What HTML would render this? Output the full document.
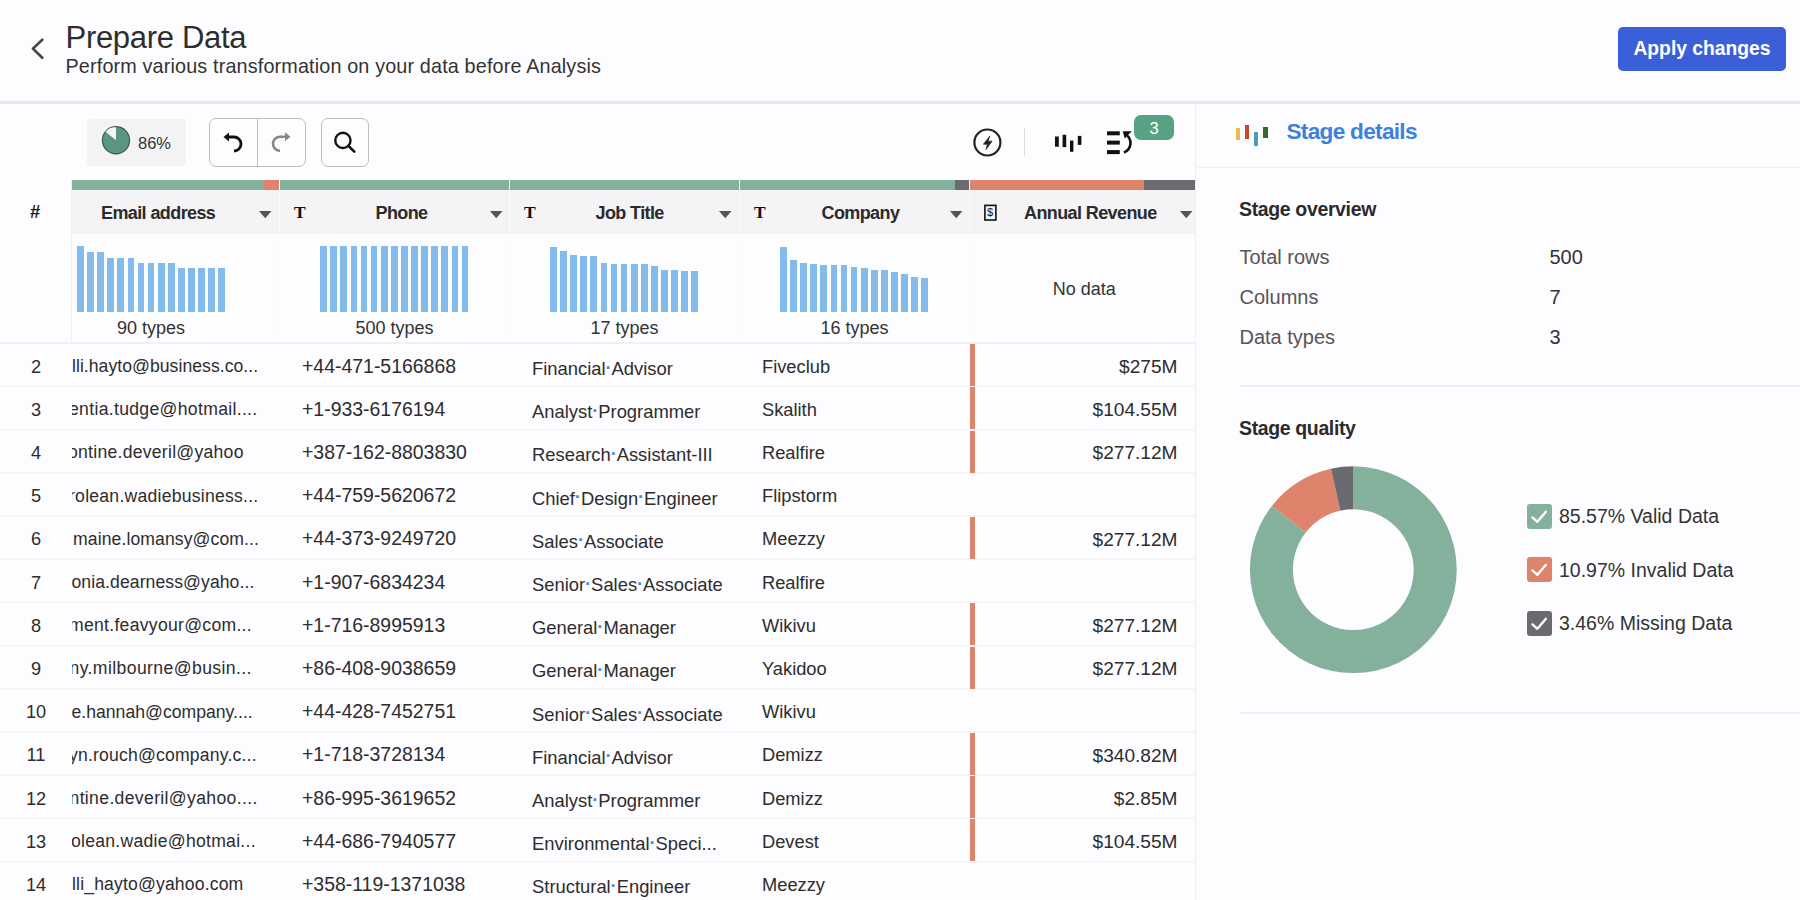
<!DOCTYPE html>
<html><head><meta charset="utf-8"><title>Prepare Data</title>
<style>
html,body{margin:0;padding:0;width:1800px;height:900px;overflow:hidden;background:#fdfcff;font-family:"Liberation Sans", sans-serif;}
.t{position:absolute;white-space:pre;line-height:1;}
.r{position:absolute;}
.dot{color:#3f8ae8;position:relative;top:-1.5px;font-weight:700;margin:0 -0.1px;}
</style></head><body>
<div class="r" style="left:0px;top:0px;width:1800px;height:101px;background:#fdfcfe;"></div>
<div class="r" style="left:0px;top:101px;width:1800px;height:2.5px;background:#e7e6ea;"></div>
<svg class="r" style="left:0;top:0" width="80" height="80"><path d="M42.3 39.7 L32.9 48.6 L42.3 57.8" fill="none" stroke="#444" stroke-width="2.6" stroke-linecap="round" stroke-linejoin="round"/></svg>
<div class="t" style="top:21.76px;font-size:31px;color:#2e2e2e;font-weight:400;letter-spacing:-0.3px;left:65.5px;">Prepare Data</div>
<div class="t" style="top:56.54px;font-size:19.8px;color:#333;font-weight:400;letter-spacing:0.15px;left:65.5px;">Perform various transformation on your data before Analysis</div>
<div class="r" style="left:1618px;top:27px;width:168px;height:44px;background:#3b5fd8;border-radius:5px;"></div>
<div class="t" style="top:39.46px;font-size:19.3px;color:#fff;font-weight:700;left:1202px;width:1000px;text-align:center;">Apply changes</div>
<div class="r" style="left:87px;top:118.5px;width:99px;height:47.5px;background:#f3f2f5;border-radius:4px;"></div>
<svg class="r" style="left:0;top:0" width="200" height="200"><circle cx="116" cy="140.3" r="13.6" fill="#5a9682" stroke="#3d5a50" stroke-width="1.2"/><path d="M116 140.3 L116 127.30000000000001 A13.0 13.0 0 0 0 105.52 131.63 Z" fill="#f4f5f2"/></svg>
<div class="t" style="top:134.73px;font-size:16.5px;color:#333;font-weight:400;left:138px;">86%</div>
<div class="r" style="left:208.5px;top:118px;width:97px;height:48.5px;background:transparent;border:1px solid #bdbdbd;border-radius:7px;box-sizing:border-box;"></div>
<div class="r" style="left:257px;top:118px;width:1px;height:48.5px;background:#bdbdbd;"></div>
<div class="r" style="left:320.5px;top:118px;width:48.5px;height:48.5px;background:transparent;border:1px solid #bdbdbd;border-radius:7px;box-sizing:border-box;"></div>
<svg class="r" style="left:0;top:0" width="400" height="200"><path d="M227 137 L234 137 A7 7 0 0 1 234 151 L234.5 151" fill="none" stroke="#111" stroke-width="2.8" stroke-linecap="round"/><path d="M223.5 137 L229 132.5 L229 141.5 Z" fill="#111"/><path d="M287 136.8 L280 136.8 A7 7 0 0 0 280 150.8 L279.5 150.8" fill="none" stroke="#888" stroke-width="2.6" stroke-linecap="round"/><path d="M290.5 136.8 L285 132.3 L285 141.3 Z" fill="#888"/><circle cx="342.9" cy="140.4" r="7.6" fill="none" stroke="#111" stroke-width="2.4"/><path d="M348.5 146 L354.3 151.6" stroke="#111" stroke-width="2.6" stroke-linecap="round"/></svg>
<svg class="r" style="left:0;top:0" width="1200" height="200"><circle cx="987.4" cy="142.5" r="13" fill="none" stroke="#222" stroke-width="2.2"/><path d="M989.9 135.9 L983.4 144.2 L987.4 144.2 L986 149.6 L992 141.2 L988 141.2 Z" fill="#222" stroke="#222" stroke-width="0.7" stroke-linejoin="round"/><rect x="1055" y="136.5" width="3.8" height="10.2" fill="#111"/><rect x="1062.6" y="134.8" width="3.6" height="12.3" fill="#111"/><rect x="1070" y="140.6" width="3.4" height="11.2" fill="#111"/><rect x="1077.8" y="135.9" width="3.6" height="9" fill="#111"/><rect x="1107" y="131.3" width="12.8" height="4" fill="#111"/><rect x="1107" y="140.6" width="12.8" height="4" fill="#111"/><rect x="1107" y="150.1" width="12.8" height="4" fill="#111"/><path d="M1124 152.5 A10 10 0 0 0 1125.5 134.5" fill="none" stroke="#111" stroke-width="2.6"/><path d="M1122.8 131.2 L1131.8 131.2 L1124.6 138.6 Z" fill="#111"/></svg>
<div class="r" style="left:1024px;top:128.3px;width:1.2px;height:28.2px;background:#dcdcdc;"></div>
<div class="r" style="left:1134.3px;top:114.6px;width:39.5px;height:25.5px;background:#58a283;border-radius:7px;"></div>
<div class="t" style="top:119.63px;font-size:16.5px;color:#fff;font-weight:400;left:654px;width:1000px;text-align:center;">3</div>
<div class="r" style="left:72px;top:180px;width:192px;height:10px;background:#84b19b;"></div>
<div class="r" style="left:264px;top:180px;width:15px;height:10px;background:#de836c;"></div>
<div class="r" style="left:280px;top:180px;width:229px;height:10px;background:#84b19b;"></div>
<div class="r" style="left:510px;top:180px;width:229px;height:10px;background:#84b19b;"></div>
<div class="r" style="left:740px;top:180px;width:215px;height:10px;background:#84b19b;"></div>
<div class="r" style="left:955px;top:180px;width:14px;height:10px;background:#6b6a6f;"></div>
<div class="r" style="left:970px;top:180px;width:174px;height:10px;background:#de836c;"></div>
<div class="r" style="left:1144px;top:180px;width:51.5px;height:10px;background:#6b6a6f;"></div>
<div class="r" style="left:72px;top:190px;width:207px;height:43.5px;background:#f4f3f6;"></div>
<div class="r" style="left:72px;top:233.5px;width:207px;height:109px;background:#fdfcff;"></div>
<div class="r" style="left:280px;top:190px;width:229px;height:43.5px;background:#f4f3f6;"></div>
<div class="r" style="left:280px;top:233.5px;width:229px;height:109px;background:#fdfcff;"></div>
<div class="r" style="left:510px;top:190px;width:229px;height:43.5px;background:#f4f3f6;"></div>
<div class="r" style="left:510px;top:233.5px;width:229px;height:109px;background:#fdfcff;"></div>
<div class="r" style="left:740px;top:190px;width:229px;height:43.5px;background:#f4f3f6;"></div>
<div class="r" style="left:740px;top:233.5px;width:229px;height:109px;background:#fdfcff;"></div>
<div class="r" style="left:970px;top:190px;width:225.5px;height:43.5px;background:#f4f3f6;"></div>
<div class="r" style="left:970px;top:233.5px;width:225.5px;height:109px;background:#fdfcff;"></div>
<div class="r" style="left:71px;top:180px;width:1px;height:163px;background:#efeef2;"></div>
<div class="r" style="left:279px;top:190px;width:1px;height:153px;background:#fbfbfd;"></div>
<div class="r" style="left:509px;top:190px;width:1px;height:153px;background:#fbfbfd;"></div>
<div class="r" style="left:739px;top:190px;width:1px;height:153px;background:#fbfbfd;"></div>
<div class="r" style="left:969px;top:190px;width:1px;height:153px;background:#fbfbfd;"></div>
<div class="r" style="left:0px;top:342px;width:1194.5px;height:2px;background:#f1f0f4;"></div>
<div class="t" style="top:202.74px;font-size:18.5px;color:#222;font-weight:700;left:-464.8px;width:1000px;text-align:center;">#</div>
<div class="t" style="top:204.46px;font-size:18px;color:#2b2b2b;font-weight:700;letter-spacing:-0.6px;left:101px;">Email address</div>
<svg class="r" style="left:259.35px;top:210px" width="13" height="9"><path d="M0 1 L12.5 1 L6.25 8.2 Z" fill="#555"/></svg>
<div class="t" style="top:204.46px;font-size:18px;color:#2b2b2b;font-weight:700;letter-spacing:-0.6px;left:375.5px;">Phone</div>
<svg class="r" style="left:490.05px;top:210px" width="13" height="9"><path d="M0 1 L12.5 1 L6.25 8.2 Z" fill="#555"/></svg>
<div class="t" style="top:204.46px;font-size:18px;color:#2b2b2b;font-weight:700;letter-spacing:-0.6px;left:595.5px;">Job Title</div>
<svg class="r" style="left:719.45px;top:210px" width="13" height="9"><path d="M0 1 L12.5 1 L6.25 8.2 Z" fill="#555"/></svg>
<div class="t" style="top:204.46px;font-size:18px;color:#2b2b2b;font-weight:700;letter-spacing:-0.6px;left:821.5px;">Company</div>
<svg class="r" style="left:949.75px;top:210px" width="13" height="9"><path d="M0 1 L12.5 1 L6.25 8.2 Z" fill="#555"/></svg>
<div class="t" style="top:204.46px;font-size:18px;color:#2b2b2b;font-weight:700;letter-spacing:-0.6px;left:1024px;">Annual Revenue</div>
<svg class="r" style="left:1179.55px;top:210px" width="13" height="9"><path d="M0 1 L12.5 1 L6.25 8.2 Z" fill="#555"/></svg>
<div class="t" style="top:204.19px;font-size:17.5px;color:#111;font-weight:700;left:294px;font-family:'Liberation Serif',serif;">T</div>
<div class="t" style="top:204.19px;font-size:17.5px;color:#111;font-weight:700;left:524px;font-family:'Liberation Serif',serif;">T</div>
<div class="t" style="top:204.19px;font-size:17.5px;color:#111;font-weight:700;left:754px;font-family:'Liberation Serif',serif;">T</div>
<svg class="r" style="left:983px;top:203px" width="16" height="20"><rect x="1.9" y="2.4" width="11" height="14.6" fill="none" stroke="#111" stroke-width="1.6"/></svg>
<div class="t" style="top:207.49px;font-size:11px;color:#111;font-weight:400;left:490px;width:1000px;text-align:center;">$</div>
<div class="r" style="left:77.0px;top:246.4px;width:6.8px;height:65.9px;background:#84bbef;"></div><div class="r" style="left:87.1px;top:252.1px;width:6.8px;height:60.2px;background:#84bbef;"></div><div class="r" style="left:97.2px;top:252.1px;width:6.8px;height:60.2px;background:#84bbef;"></div><div class="r" style="left:107.3px;top:257.6px;width:6.8px;height:54.7px;background:#84bbef;"></div><div class="r" style="left:117.4px;top:257.6px;width:6.8px;height:54.7px;background:#84bbef;"></div><div class="r" style="left:127.5px;top:257.6px;width:6.8px;height:54.7px;background:#84bbef;"></div><div class="r" style="left:137.6px;top:262.8px;width:6.8px;height:49.5px;background:#84bbef;"></div><div class="r" style="left:147.7px;top:262.8px;width:6.8px;height:49.5px;background:#84bbef;"></div><div class="r" style="left:157.8px;top:262.8px;width:6.8px;height:49.5px;background:#84bbef;"></div><div class="r" style="left:167.9px;top:262.8px;width:6.8px;height:49.5px;background:#84bbef;"></div><div class="r" style="left:178.0px;top:268.3px;width:6.8px;height:44.0px;background:#84bbef;"></div><div class="r" style="left:188.1px;top:268.3px;width:6.8px;height:44.0px;background:#84bbef;"></div><div class="r" style="left:198.2px;top:268.3px;width:6.8px;height:44.0px;background:#84bbef;"></div><div class="r" style="left:208.3px;top:268.3px;width:6.8px;height:44.0px;background:#84bbef;"></div><div class="r" style="left:218.4px;top:268.3px;width:6.8px;height:44.0px;background:#84bbef;"></div>
<div class="r" style="left:320.2px;top:246.4px;width:6.8px;height:65.9px;background:#84bbef;"></div><div class="r" style="left:330.3px;top:246.4px;width:6.8px;height:65.9px;background:#84bbef;"></div><div class="r" style="left:340.4px;top:246.4px;width:6.8px;height:65.9px;background:#84bbef;"></div><div class="r" style="left:350.5px;top:246.4px;width:6.8px;height:65.9px;background:#84bbef;"></div><div class="r" style="left:360.6px;top:246.4px;width:6.8px;height:65.9px;background:#84bbef;"></div><div class="r" style="left:370.7px;top:246.4px;width:6.8px;height:65.9px;background:#84bbef;"></div><div class="r" style="left:380.8px;top:246.4px;width:6.8px;height:65.9px;background:#84bbef;"></div><div class="r" style="left:390.9px;top:246.4px;width:6.8px;height:65.9px;background:#84bbef;"></div><div class="r" style="left:401.0px;top:246.4px;width:6.8px;height:65.9px;background:#84bbef;"></div><div class="r" style="left:411.1px;top:246.4px;width:6.8px;height:65.9px;background:#84bbef;"></div><div class="r" style="left:421.2px;top:246.4px;width:6.8px;height:65.9px;background:#84bbef;"></div><div class="r" style="left:431.3px;top:246.4px;width:6.8px;height:65.9px;background:#84bbef;"></div><div class="r" style="left:441.4px;top:246.4px;width:6.8px;height:65.9px;background:#84bbef;"></div><div class="r" style="left:451.5px;top:246.4px;width:6.8px;height:65.9px;background:#84bbef;"></div><div class="r" style="left:461.6px;top:246.4px;width:6.8px;height:65.9px;background:#84bbef;"></div>
<div class="r" style="left:550.0px;top:246.7px;width:6.8px;height:65.3px;background:#84bbef;"></div><div class="r" style="left:560.1px;top:251.4px;width:6.8px;height:60.6px;background:#84bbef;"></div><div class="r" style="left:570.2px;top:254.7px;width:6.8px;height:57.3px;background:#84bbef;"></div><div class="r" style="left:580.3px;top:256.1px;width:6.8px;height:55.9px;background:#84bbef;"></div><div class="r" style="left:590.4px;top:256.1px;width:6.8px;height:55.9px;background:#84bbef;"></div><div class="r" style="left:600.5px;top:263px;width:6.8px;height:49px;background:#84bbef;"></div><div class="r" style="left:610.6px;top:264.4px;width:6.8px;height:47.6px;background:#84bbef;"></div><div class="r" style="left:620.7px;top:264.4px;width:6.8px;height:47.6px;background:#84bbef;"></div><div class="r" style="left:630.8px;top:264.4px;width:6.8px;height:47.6px;background:#84bbef;"></div><div class="r" style="left:640.9px;top:264.4px;width:6.8px;height:47.6px;background:#84bbef;"></div><div class="r" style="left:651.0px;top:266px;width:6.8px;height:46px;background:#84bbef;"></div><div class="r" style="left:661.1px;top:269.7px;width:6.8px;height:42.3px;background:#84bbef;"></div><div class="r" style="left:671.2px;top:269.7px;width:6.8px;height:42.3px;background:#84bbef;"></div><div class="r" style="left:681.3px;top:271.1px;width:6.8px;height:40.9px;background:#84bbef;"></div><div class="r" style="left:691.4px;top:271.1px;width:6.8px;height:40.9px;background:#84bbef;"></div>
<div class="r" style="left:780.0px;top:246.7px;width:6.8px;height:65.3px;background:#84bbef;"></div><div class="r" style="left:790.1px;top:259.7px;width:6.8px;height:52.3px;background:#84bbef;"></div><div class="r" style="left:800.2px;top:262.5px;width:6.8px;height:49.5px;background:#84bbef;"></div><div class="r" style="left:810.3px;top:263.9px;width:6.8px;height:48.1px;background:#84bbef;"></div><div class="r" style="left:820.4px;top:265.3px;width:6.8px;height:46.7px;background:#84bbef;"></div><div class="r" style="left:830.5px;top:265.3px;width:6.8px;height:46.7px;background:#84bbef;"></div><div class="r" style="left:840.6px;top:265.3px;width:6.8px;height:46.7px;background:#84bbef;"></div><div class="r" style="left:850.7px;top:266.7px;width:6.8px;height:45.3px;background:#84bbef;"></div><div class="r" style="left:860.8px;top:268px;width:6.8px;height:44px;background:#84bbef;"></div><div class="r" style="left:870.9px;top:269.7px;width:6.8px;height:42.3px;background:#84bbef;"></div><div class="r" style="left:881.0px;top:269.7px;width:6.8px;height:42.3px;background:#84bbef;"></div><div class="r" style="left:891.1px;top:272.2px;width:6.8px;height:39.8px;background:#84bbef;"></div><div class="r" style="left:901.2px;top:273.9px;width:6.8px;height:38.1px;background:#84bbef;"></div><div class="r" style="left:911.3px;top:277px;width:6.8px;height:35px;background:#84bbef;"></div><div class="r" style="left:921.4px;top:278.3px;width:6.8px;height:33.7px;background:#84bbef;"></div>
<div class="t" style="top:319.26px;font-size:18px;color:#333;font-weight:400;left:-349px;width:1000px;text-align:center;">90 types</div>
<div class="t" style="top:319.26px;font-size:18px;color:#333;font-weight:400;left:-105.5px;width:1000px;text-align:center;">500 types</div>
<div class="t" style="top:319.26px;font-size:18px;color:#333;font-weight:400;left:124.5px;width:1000px;text-align:center;">17 types</div>
<div class="t" style="top:319.26px;font-size:18px;color:#333;font-weight:400;left:354.5px;width:1000px;text-align:center;">16 types</div>
<div class="t" style="top:279.76px;font-size:18px;color:#333;font-weight:400;left:584.3px;width:1000px;text-align:center;">No data</div>
<div class="r" style="left:0px;top:385px;width:1194.5px;height:2px;background:#f5f4f7;"></div>
<div class="t" style="top:357.59px;font-size:18.2px;color:#2d2d2d;font-weight:400;left:-464px;width:1000px;text-align:center;">2</div>
<div class="r" style="left:72px;top:343.20px;width:206px;height:43.2px;overflow:hidden"><div class="t" style="top:14.90px;font-size:17.6px;color:#2d2d2d;font-weight:400;letter-spacing:0.043px;left:0px;">lli.hayto@business.co...</div></div>
<div class="t" style="top:356.54px;font-size:19.45px;color:#2d2d2d;font-weight:400;left:302px;">+44-471-5166868</div>
<div class="t" style="top:360.02px;font-size:18.4px;color:#2d2d2d;font-weight:400;left:532px;">Financial<span class="dot">·</span>Advisor</div>
<div class="t" style="top:357.51px;font-size:18.3px;color:#2d2d2d;font-weight:400;left:762px;">Fiveclub</div>
<div class="r" style="left:969.8px;top:344.2px;width:5.5px;height:42.0px;background:#de836c;"></div>
<div class="t" style="top:356.83px;font-size:19.1px;color:#2d2d2d;font-weight:400;right:622.5px;">$275M</div>
<div class="r" style="left:0px;top:429px;width:1194.5px;height:2px;background:#f5f4f7;"></div>
<div class="t" style="top:400.79px;font-size:18.2px;color:#2d2d2d;font-weight:400;left:-464px;width:1000px;text-align:center;">3</div>
<div class="r" style="left:72px;top:386.40px;width:206px;height:43.2px;overflow:hidden"><div class="t" style="top:14.90px;font-size:17.6px;color:#2d2d2d;font-weight:400;letter-spacing:0.318px;left:-3px;">entia.tudge@hotmail....</div></div>
<div class="t" style="top:399.74px;font-size:19.45px;color:#2d2d2d;font-weight:400;left:302px;">+1-933-6176194</div>
<div class="t" style="top:403.22px;font-size:18.4px;color:#2d2d2d;font-weight:400;left:532px;">Analyst<span class="dot">·</span>Programmer</div>
<div class="t" style="top:400.71px;font-size:18.3px;color:#2d2d2d;font-weight:400;left:762px;">Skalith</div>
<div class="r" style="left:969.8px;top:387.4px;width:5.5px;height:42.0px;background:#de836c;"></div>
<div class="t" style="top:400.03px;font-size:19.1px;color:#2d2d2d;font-weight:400;right:622.5px;">$104.55M</div>
<div class="r" style="left:0px;top:472px;width:1194.5px;height:2px;background:#f5f4f7;"></div>
<div class="t" style="top:443.99px;font-size:18.2px;color:#2d2d2d;font-weight:400;left:-464px;width:1000px;text-align:center;">4</div>
<div class="r" style="left:72px;top:429.60px;width:206px;height:43.2px;overflow:hidden"><div class="t" style="top:14.90px;font-size:17.6px;color:#2d2d2d;font-weight:400;letter-spacing:0.263px;left:-4px;">ontine.deveril@yahoo</div></div>
<div class="t" style="top:442.94px;font-size:19.45px;color:#2d2d2d;font-weight:400;left:302px;">+387-162-8803830</div>
<div class="t" style="top:446.42px;font-size:18.4px;color:#2d2d2d;font-weight:400;left:532px;">Research<span class="dot">·</span>Assistant-III</div>
<div class="t" style="top:443.91px;font-size:18.3px;color:#2d2d2d;font-weight:400;left:762px;">Realfire</div>
<div class="r" style="left:969.8px;top:430.6px;width:5.5px;height:42.0px;background:#de836c;"></div>
<div class="t" style="top:443.23px;font-size:19.1px;color:#2d2d2d;font-weight:400;right:622.5px;">$277.12M</div>
<div class="r" style="left:0px;top:515px;width:1194.5px;height:2px;background:#f5f4f7;"></div>
<div class="t" style="top:487.19px;font-size:18.2px;color:#2d2d2d;font-weight:400;left:-464px;width:1000px;text-align:center;">5</div>
<div class="r" style="left:72px;top:472.80px;width:206px;height:43.2px;overflow:hidden"><div class="t" style="top:14.90px;font-size:17.6px;color:#2d2d2d;font-weight:400;letter-spacing:0.245px;left:-3px;">rolean.wadiebusiness...</div></div>
<div class="t" style="top:486.14px;font-size:19.45px;color:#2d2d2d;font-weight:400;left:302px;">+44-759-5620672</div>
<div class="t" style="top:489.62px;font-size:18.4px;color:#2d2d2d;font-weight:400;left:532px;">Chief<span class="dot">·</span>Design<span class="dot">·</span>Engineer</div>
<div class="t" style="top:487.11px;font-size:18.3px;color:#2d2d2d;font-weight:400;left:762px;">Flipstorm</div>
<div class="r" style="left:0px;top:558px;width:1194.5px;height:2px;background:#f5f4f7;"></div>
<div class="t" style="top:530.39px;font-size:18.2px;color:#2d2d2d;font-weight:400;left:-464px;width:1000px;text-align:center;">6</div>
<div class="r" style="left:72px;top:516.00px;width:206px;height:43.2px;overflow:hidden"><div class="t" style="top:14.90px;font-size:17.6px;color:#2d2d2d;font-weight:400;letter-spacing:0.095px;left:1px;">maine.lomansy@com...</div></div>
<div class="t" style="top:529.34px;font-size:19.45px;color:#2d2d2d;font-weight:400;left:302px;">+44-373-9249720</div>
<div class="t" style="top:532.82px;font-size:18.4px;color:#2d2d2d;font-weight:400;left:532px;">Sales<span class="dot">·</span>Associate</div>
<div class="t" style="top:530.31px;font-size:18.3px;color:#2d2d2d;font-weight:400;left:762px;">Meezzy</div>
<div class="r" style="left:969.8px;top:517.0px;width:5.5px;height:42.0px;background:#de836c;"></div>
<div class="t" style="top:529.63px;font-size:19.1px;color:#2d2d2d;font-weight:400;right:622.5px;">$277.12M</div>
<div class="r" style="left:0px;top:601px;width:1194.5px;height:2px;background:#f5f4f7;"></div>
<div class="t" style="top:573.59px;font-size:18.2px;color:#2d2d2d;font-weight:400;left:-464px;width:1000px;text-align:center;">7</div>
<div class="r" style="left:72px;top:559.20px;width:206px;height:43.2px;overflow:hidden"><div class="t" style="top:14.90px;font-size:17.6px;color:#2d2d2d;font-weight:400;letter-spacing:0.08px;left:-0.5px;">onia.dearness@yaho...</div></div>
<div class="t" style="top:572.54px;font-size:19.45px;color:#2d2d2d;font-weight:400;left:302px;">+1-907-6834234</div>
<div class="t" style="top:576.02px;font-size:18.4px;color:#2d2d2d;font-weight:400;left:532px;">Senior<span class="dot">·</span>Sales<span class="dot">·</span>Associate</div>
<div class="t" style="top:573.51px;font-size:18.3px;color:#2d2d2d;font-weight:400;left:762px;">Realfire</div>
<div class="r" style="left:0px;top:645px;width:1194.5px;height:2px;background:#f5f4f7;"></div>
<div class="t" style="top:616.79px;font-size:18.2px;color:#2d2d2d;font-weight:400;left:-464px;width:1000px;text-align:center;">8</div>
<div class="r" style="left:72px;top:602.40px;width:206px;height:43.2px;overflow:hidden"><div class="t" style="top:14.90px;font-size:17.6px;color:#2d2d2d;font-weight:400;letter-spacing:0.284px;left:-3px;">ment.feavyour@com...</div></div>
<div class="t" style="top:615.74px;font-size:19.45px;color:#2d2d2d;font-weight:400;left:302px;">+1-716-8995913</div>
<div class="t" style="top:619.22px;font-size:18.4px;color:#2d2d2d;font-weight:400;left:532px;">General<span class="dot">·</span>Manager</div>
<div class="t" style="top:616.71px;font-size:18.3px;color:#2d2d2d;font-weight:400;left:762px;">Wikivu</div>
<div class="r" style="left:969.8px;top:603.4px;width:5.5px;height:42.0px;background:#de836c;"></div>
<div class="t" style="top:616.03px;font-size:19.1px;color:#2d2d2d;font-weight:400;right:622.5px;">$277.12M</div>
<div class="r" style="left:0px;top:688px;width:1194.5px;height:2px;background:#f5f4f7;"></div>
<div class="t" style="top:659.99px;font-size:18.2px;color:#2d2d2d;font-weight:400;left:-464px;width:1000px;text-align:center;">9</div>
<div class="r" style="left:72px;top:645.60px;width:206px;height:43.2px;overflow:hidden"><div class="t" style="top:14.90px;font-size:17.6px;color:#2d2d2d;font-weight:400;letter-spacing:0.4px;left:-2.5px;">ny.milbourne@busin...</div></div>
<div class="t" style="top:658.94px;font-size:19.45px;color:#2d2d2d;font-weight:400;left:302px;">+86-408-9038659</div>
<div class="t" style="top:662.42px;font-size:18.4px;color:#2d2d2d;font-weight:400;left:532px;">General<span class="dot">·</span>Manager</div>
<div class="t" style="top:659.91px;font-size:18.3px;color:#2d2d2d;font-weight:400;left:762px;">Yakidoo</div>
<div class="r" style="left:969.8px;top:646.6px;width:5.5px;height:42.0px;background:#de836c;"></div>
<div class="t" style="top:659.23px;font-size:19.1px;color:#2d2d2d;font-weight:400;right:622.5px;">$277.12M</div>
<div class="r" style="left:0px;top:731px;width:1194.5px;height:2px;background:#f5f4f7;"></div>
<div class="t" style="top:703.19px;font-size:18.2px;color:#2d2d2d;font-weight:400;left:-464px;width:1000px;text-align:center;">10</div>
<div class="r" style="left:72px;top:688.80px;width:206px;height:43.2px;overflow:hidden"><div class="t" style="top:14.90px;font-size:17.6px;color:#2d2d2d;font-weight:400;letter-spacing:0.016px;left:-0.5px;">e.hannah@company....</div></div>
<div class="t" style="top:702.14px;font-size:19.45px;color:#2d2d2d;font-weight:400;left:302px;">+44-428-7452751</div>
<div class="t" style="top:705.62px;font-size:18.4px;color:#2d2d2d;font-weight:400;left:532px;">Senior<span class="dot">·</span>Sales<span class="dot">·</span>Associate</div>
<div class="t" style="top:703.11px;font-size:18.3px;color:#2d2d2d;font-weight:400;left:762px;">Wikivu</div>
<div class="r" style="left:0px;top:774px;width:1194.5px;height:2px;background:#f5f4f7;"></div>
<div class="t" style="top:746.39px;font-size:18.2px;color:#2d2d2d;font-weight:400;left:-464px;width:1000px;text-align:center;">11</div>
<div class="r" style="left:72px;top:732.00px;width:206px;height:43.2px;overflow:hidden"><div class="t" style="top:14.90px;font-size:17.6px;color:#2d2d2d;font-weight:400;letter-spacing:0.19px;left:-3px;">yn.rouch@company.c...</div></div>
<div class="t" style="top:745.34px;font-size:19.45px;color:#2d2d2d;font-weight:400;left:302px;">+1-718-3728134</div>
<div class="t" style="top:748.82px;font-size:18.4px;color:#2d2d2d;font-weight:400;left:532px;">Financial<span class="dot">·</span>Advisor</div>
<div class="t" style="top:746.31px;font-size:18.3px;color:#2d2d2d;font-weight:400;left:762px;">Demizz</div>
<div class="r" style="left:969.8px;top:733.0px;width:5.5px;height:42.0px;background:#de836c;"></div>
<div class="t" style="top:745.63px;font-size:19.1px;color:#2d2d2d;font-weight:400;right:622.5px;">$340.82M</div>
<div class="r" style="left:0px;top:817px;width:1194.5px;height:2px;background:#f5f4f7;"></div>
<div class="t" style="top:789.59px;font-size:18.2px;color:#2d2d2d;font-weight:400;left:-464px;width:1000px;text-align:center;">12</div>
<div class="r" style="left:72px;top:775.20px;width:206px;height:43.2px;overflow:hidden"><div class="t" style="top:14.90px;font-size:17.6px;color:#2d2d2d;font-weight:400;letter-spacing:0.345px;left:-2.5px;">ntine.deveril@yahoo....</div></div>
<div class="t" style="top:788.54px;font-size:19.45px;color:#2d2d2d;font-weight:400;left:302px;">+86-995-3619652</div>
<div class="t" style="top:792.02px;font-size:18.4px;color:#2d2d2d;font-weight:400;left:532px;">Analyst<span class="dot">·</span>Programmer</div>
<div class="t" style="top:789.51px;font-size:18.3px;color:#2d2d2d;font-weight:400;left:762px;">Demizz</div>
<div class="r" style="left:969.8px;top:776.2px;width:5.5px;height:42.0px;background:#de836c;"></div>
<div class="t" style="top:788.83px;font-size:19.1px;color:#2d2d2d;font-weight:400;right:622.5px;">$2.85M</div>
<div class="r" style="left:0px;top:861px;width:1194.5px;height:2px;background:#f5f4f7;"></div>
<div class="t" style="top:832.79px;font-size:18.2px;color:#2d2d2d;font-weight:400;left:-464px;width:1000px;text-align:center;">13</div>
<div class="r" style="left:72px;top:818.40px;width:206px;height:43.2px;overflow:hidden"><div class="t" style="top:14.90px;font-size:17.6px;color:#2d2d2d;font-weight:400;letter-spacing:0.265px;left:-1px;">olean.wadie@hotmai...</div></div>
<div class="t" style="top:831.74px;font-size:19.45px;color:#2d2d2d;font-weight:400;left:302px;">+44-686-7940577</div>
<div class="t" style="top:835.22px;font-size:18.4px;color:#2d2d2d;font-weight:400;left:532px;">Environmental<span class="dot">·</span>Speci...</div>
<div class="t" style="top:832.71px;font-size:18.3px;color:#2d2d2d;font-weight:400;left:762px;">Devest</div>
<div class="r" style="left:969.8px;top:819.4px;width:5.5px;height:42.0px;background:#de836c;"></div>
<div class="t" style="top:832.03px;font-size:19.1px;color:#2d2d2d;font-weight:400;right:622.5px;">$104.55M</div>
<div class="t" style="top:875.99px;font-size:18.2px;color:#2d2d2d;font-weight:400;left:-464px;width:1000px;text-align:center;">14</div>
<div class="r" style="left:72px;top:861.60px;width:206px;height:43.2px;overflow:hidden"><div class="t" style="top:14.90px;font-size:17.6px;color:#2d2d2d;font-weight:400;letter-spacing:0.156px;left:0px;">lli_hayto@yahoo.com</div></div>
<div class="t" style="top:874.94px;font-size:19.45px;color:#2d2d2d;font-weight:400;left:302px;">+358-119-1371038</div>
<div class="t" style="top:878.42px;font-size:18.4px;color:#2d2d2d;font-weight:400;left:532px;">Structural<span class="dot">·</span>Engineer</div>
<div class="t" style="top:875.91px;font-size:18.3px;color:#2d2d2d;font-weight:400;left:762px;">Meezzy</div>
<div class="r" style="left:1195px;top:103px;width:1.2px;height:797px;background:#efeef2;"></div>
<div class="r" style="left:1196.5px;top:166.5px;width:603.5px;height:1.2px;background:#efeef2;"></div>
<div class="r" style="left:1236px;top:128px;width:4px;height:11.7px;background:#f0b94a;border-radius:0.5px;"></div>
<div class="r" style="left:1245.4px;top:125.1px;width:3.9px;height:14.1px;background:#c9482a;"></div>
<div class="r" style="left:1254px;top:132px;width:3.9px;height:14.4px;background:#4b9bbd;"></div>
<div class="r" style="left:1263.3px;top:126.8px;width:4.4px;height:11px;background:#2d6b35;"></div>
<div class="t" style="top:121.47px;font-size:22.6px;color:#4080dd;font-weight:700;letter-spacing:-0.7px;left:1286.5px;">Stage details</div>
<div class="t" style="top:199.89px;font-size:19.5px;color:#2b2b2b;font-weight:700;letter-spacing:-0.36px;left:1239px;">Stage overview</div>
<div class="t" style="top:247.07px;font-size:20px;color:#555;font-weight:400;left:1239.5px;">Total rows</div>
<div class="t" style="top:247.07px;font-size:20px;color:#333;font-weight:400;left:1549.5px;">500</div>
<div class="t" style="top:287.07px;font-size:20px;color:#555;font-weight:400;left:1239.5px;">Columns</div>
<div class="t" style="top:287.07px;font-size:20px;color:#333;font-weight:400;left:1549.5px;">7</div>
<div class="t" style="top:327.07px;font-size:20px;color:#555;font-weight:400;left:1239.5px;">Data types</div>
<div class="t" style="top:327.07px;font-size:20px;color:#333;font-weight:400;left:1549.5px;">3</div>
<div class="r" style="left:1239.5px;top:385px;width:560.5px;height:1.5px;background:#efeef2;"></div>
<div class="t" style="top:418.79px;font-size:19.5px;color:#2b2b2b;font-weight:700;letter-spacing:-0.37px;left:1239px;">Stage quality</div>
<svg class="r" style="left:0;top:0" width="1800" height="900"><path d="M1353.30 466.30 A103.4 103.4 0 1 1 1271.88 505.97 L1305.74 532.47 A60.4 60.4 0 1 0 1353.30 509.30 Z" fill="#84b19b"/><path d="M1271.88 505.97 A103.4 103.4 0 0 1 1331.00 468.73 L1340.27 510.72 A60.4 60.4 0 0 0 1305.74 532.47 Z" fill="#de836c"/><path d="M1331.00 468.73 A103.4 103.4 0 0 1 1353.30 466.30 L1353.30 509.30 A60.4 60.4 0 0 0 1340.27 510.72 Z" fill="#6b6a6f"/></svg>
<div class="r" style="left:1526.7px;top:503.9px;width:25.2px;height:25px;background:#84b19b;border-radius:3px;"></div>
<svg class="r" style="left:1526.7px;top:503.9px" width="26" height="26"><path d="M5.4 13.4 L10.4 17.8 L18.9 7.8" fill="none" stroke="#fff" stroke-width="2.4" stroke-linecap="round" stroke-linejoin="round"/></svg>
<div class="t" style="top:507.39px;font-size:19.5px;color:#333;font-weight:400;left:1559px;">85.57% Valid Data</div>
<div class="r" style="left:1526.7px;top:557.2px;width:25.2px;height:25px;background:#de836c;border-radius:3px;"></div>
<svg class="r" style="left:1526.7px;top:557.2px" width="26" height="26"><path d="M5.4 13.4 L10.4 17.8 L18.9 7.8" fill="none" stroke="#fff" stroke-width="2.4" stroke-linecap="round" stroke-linejoin="round"/></svg>
<div class="t" style="top:560.69px;font-size:19.5px;color:#333;font-weight:400;left:1559px;">10.97% Invalid Data</div>
<div class="r" style="left:1526.7px;top:610.9px;width:25.2px;height:25px;background:#6b6a6f;border-radius:3px;"></div>
<svg class="r" style="left:1526.7px;top:610.9px" width="26" height="26"><path d="M5.4 13.4 L10.4 17.8 L18.9 7.8" fill="none" stroke="#fff" stroke-width="2.4" stroke-linecap="round" stroke-linejoin="round"/></svg>
<div class="t" style="top:614.39px;font-size:19.5px;color:#333;font-weight:400;left:1559px;">3.46% Missing Data</div>
<div class="r" style="left:1239.5px;top:712px;width:560.5px;height:1.5px;background:#f1f0f4;"></div>
</body></html>
